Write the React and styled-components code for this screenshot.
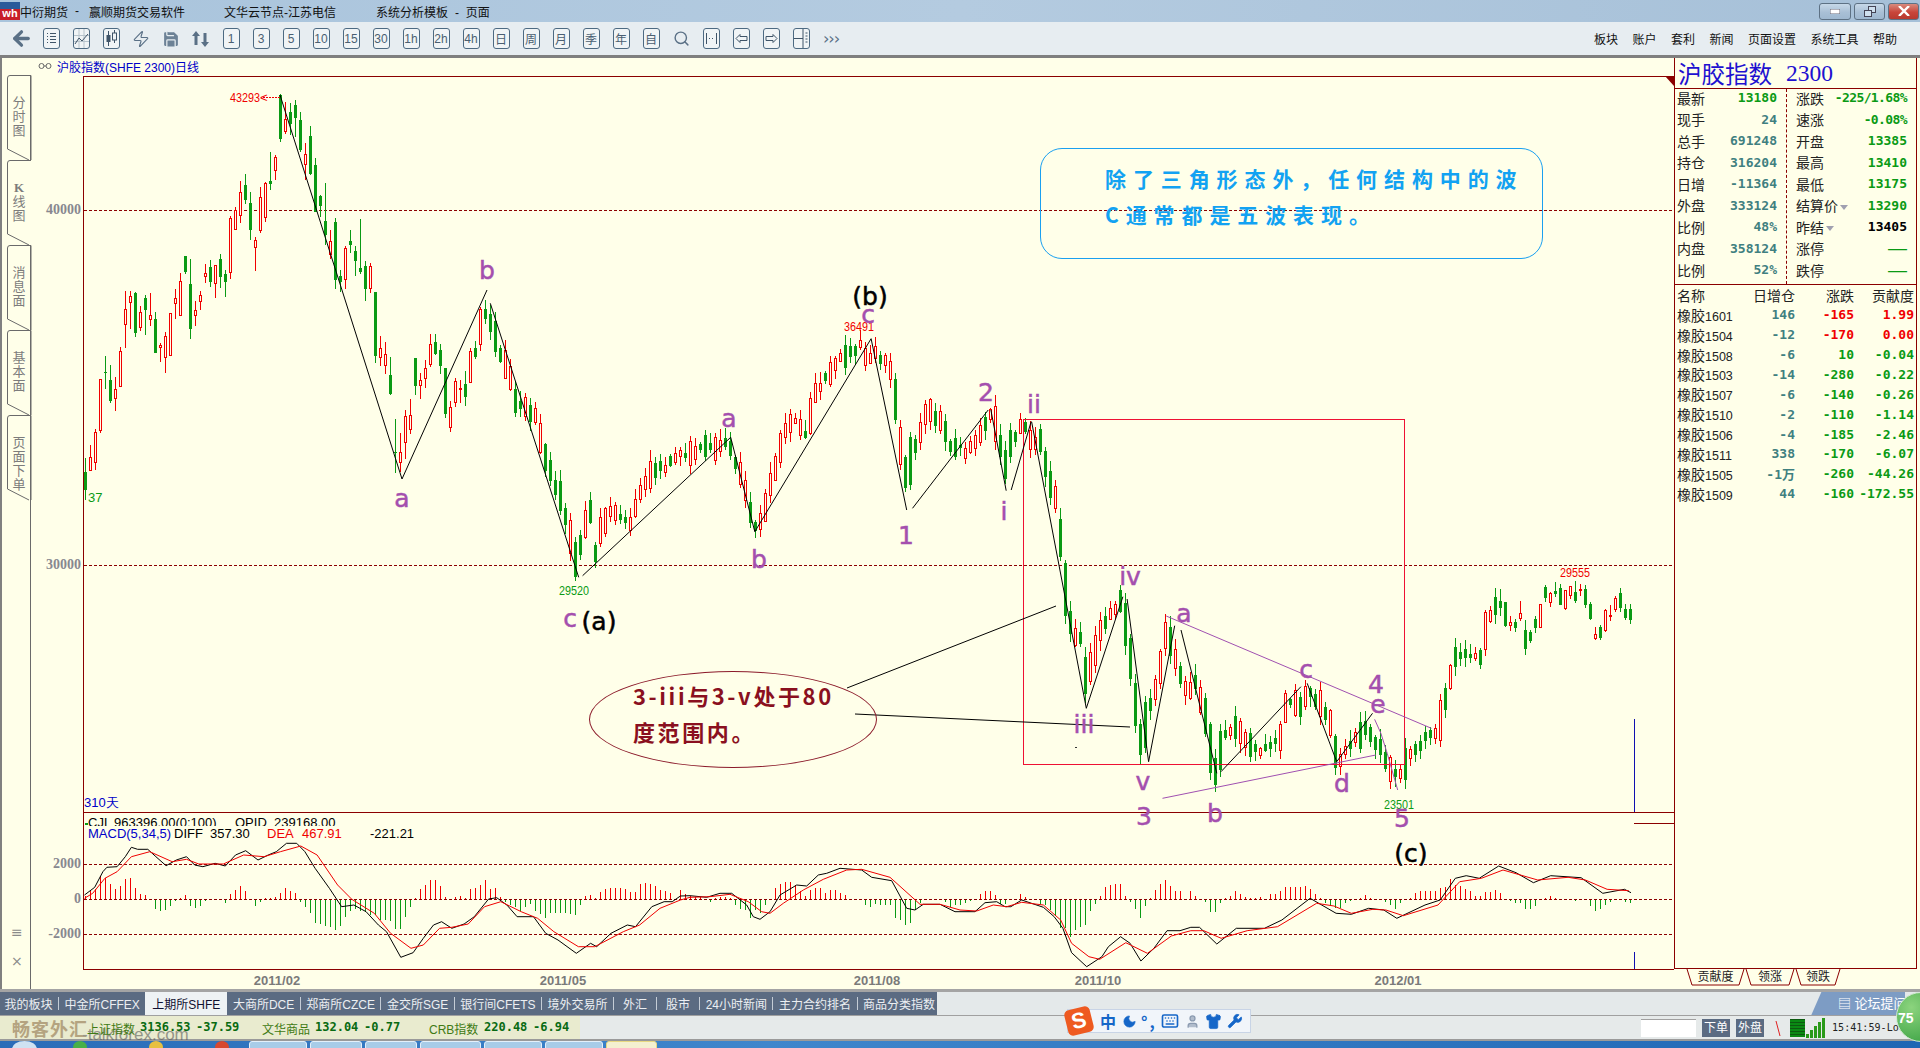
import React from "react"
import styled, { createGlobalStyle } from "styled-components"
import { Search, Moon, Keyboard, Shirt, Wrench, ArrowLeft, Zap, Save, User } from "lucide-react"

const CJK = `"Liberation Sans", "Noto Sans CJK SC", sans-serif`
const MONO = `"DejaVu Sans Mono", "Noto Sans CJK SC", monospace`
const PAPER = "#ffffe9"
const FRAME = "#8b0000"
const GREEN = "#0a9a14"
const TEAL = "#3f8080"

// ---- chart data, read from the chart by eye ----

// first stretch: [color, wickTop, bodyTop, bodyBottom, wickBottom] at 3x zoom
const firstBars = [
  "G 1195 1237 1290 1320", "R 1155 1190 1228 1232", "R 1108 1116 1207 1232", "R 958 958 1112 1120",
  "G 888 937 941 987", "G 915 960 1022 1030", "R 950 988 1016 1052", "R 862 874 980 980",
  "R 693 748 794 863", "R 693 708 725 806", "G 697 699 818 833", "R 738 757 803 813",
  "G 706 714 749 827", "R 699 766 778 797", "G 757 778 881 881", "R 850 856 862 908",
  "R 816 829 892 938", "R 760 760 886 886", "R 687 715 731 778", "R 640 664 766 768",
  "G 589 589 638 642", "G 598 672 806 838", "R 723 751 767 797", "R 693 706 724 750",
  "R 612 640 650 668", "G 601 622 666 683", "R 616 616 670 716", "G 582 598 651 683",
  "G 630 642 665 710", "R 468 475 637 658", "R 442 451 507 512", "R 364 397 466 489",
  "G 342 376 422 432", "G 396 430 510 539", "R 530 541 562 632", "R 380 412 510 518",
  "R 366 369 470 486", "G 277 364 374 392", "R 286 292 331 360", "G 103 105 236 248",
  "R 125 178 215 222", "G 130 156 192 225", "G 120 135 173 230", "G 157 181 272 276",
  "R 250 281 310 360", "G 198 228 342 345", "G 295 316 456 457", "G 405 408 437 470",
  "G 370 484 527 556", "R 510 542 582 596", "G 475 487 661 688", "G 630 648 665 697",
  "R 558 564 658 687", "G 510 544 556 578", "G 558 574 603 647", "G 477 625 637 642",
  "G 603 618 688 722", "R 609 618 683 698", "G 696 696 887 908", "R 828 865 892 917",
  "R 846 882 914 942", "G 891 945 1002 1005", "G 1077 1175 1178 1240", "R 1120 1177 1208 1238",
  "R 1050 1069 1148 1197", "R 1018 1066 1108 1122", "G 895 895 980 1007", "R 940 961 977 1017",
  "R 900 925 956 985", "R 822 853 912 920", "G 823 847 882 885", "G 853 870 917 942",
  "G 923 923 1060 1074", "R 1023 1042 1102 1116", "R 955 963 1025 1043", "R 960 985 987 1030",
  "G 934 972 1010 1038", "R 865 874 968 968", "G 843 865 891 897",
]

const lastBars = [
  "G 148 184 206 228", "G 186 186 258 260", "R 228 247 257 272", "G 238 246 263 278",
  "R 183 220 236 243", "G 241 271 329 347", "G 270 277 305 310", "G 227 238 266 278",
  "R 192 193 261 263", "G 135 141 174 187", "R 155 159 185 200", "G 126 153 161 170",
  "G 133 145 195 197", "R 151 151 206 212", "R 138 139 165 177", "G 124 156 183 190",
  "R 132 146 147 167", "G 135 147 195 203", "G 187 192 236 240", "R 262 283 294 302",
  "G 254 261 293 298", "R 207 210 271 276", "R 195 224 226 243", "R 168 174 208 215",
  "G 144 159 204 215", "G 193 207 233 242", "G 193 208 242 254",
]

// body centre path for the middle stretch
const pathA = [
  [15,210],[40,300],[65,370],[95,490],[145,520],[170,660],[195,730],[222,820],[237,890],[250,965],
  [275,850],[290,810],[300,950],[315,870],[340,815],[395,845],[420,760],[445,705],[485,675],[510,650],
  [550,640],[600,620],[640,610],[667,660],[690,740],[707,830],[720,870],[745,800],[772,670],[800,560],
  [825,530],[850,590],[875,450],[915,400],[940,340],[980,340],[997,300],[1010,370],[1035,340],[1075,390],
  [1088,520],[1100,630],[1115,740],[1128,640],[1140,610],[1165,505],[1205,550],[1230,630],[1270,630],
  [1310,570],[1337,520],[1362,630],[1375,690],[1388,600],[1416,555],[1440,600],[1466,600],[1480,700],
  [1505,790],[1520,930],
].map(([x, y]) => [480 + x / 2.613, 240 + y / 3])

const pathB = [
  [157,600],[170,700],[195,720],[205,880],[217,780],[240,690],[265,640],[290,590],[300,720],[312,800],
  [325,960],[337,1060],[348,930],[372,860],[395,680],[420,790],[445,880],[465,840],[490,960],[502,1085],
  [514,1130],[527,1000],[550,985],[575,1005],[600,1050],[630,1040],[665,1010],[680,900],[715,920],
  [730,870],[762,910],[787,985],[800,1085],[835,1035],[870,975],[895,1030],[918,1080],[942,1130],
  [954,1130],[966,1080],[990,1045],[1013,1000],[1037,1010],[1060,880],[1085,760],[1108,760],[1143,770],
  [1156,670],[1180,620],[1205,640],[1228,670],[1250,700],[1285,650],[1298,575],
].map(([x, y]) => [1000 + x / 2.376, 400 + y / 3])

const bodyPath = [[476, 340], ...pathA, ...pathB]

const interp = (pts, x) => {
  for (let i = 1; i < pts.length; i++) {
    if (x <= pts[i][0]) {
      const [x0, y0] = pts[i - 1]
      const [x1, y1] = pts[i]
      return y0 + ((x - x0) / (x1 - x0)) * (y1 - y0)
    }
  }
  return pts[pts.length - 1][1]
}

const parseBar = (s, base) => {
  const [c, a, b, d, e] = s.split(" ")
  return { up: c === "R", hi: base + a / 3, top: base + b / 3, bot: base + d / 3, lo: base + e / 3 }
}

const buildBars = () => {
  let seed = 71
  const rnd = () => {
    seed = (seed * 16807) % 2147483647
    return (seed % 1000) / 1000
  }
  const bars = []
  for (let i = 0; i < 310; i++) {
    const x = 85 + 5 * i
    if (i < firstBars.length) {
      bars.push({ x, ...parseBar(firstBars[i], 60) })
    } else if (i >= 283) {
      bars.push({ x, ...parseBar(lastBars[i - 283], 540) })
    } else {
      const slope = interp(bodyPath, x + 2.5) - interp(bodyPath, x - 2.5)
      const mid = interp(bodyPath, x) + (rnd() - 0.5) * 7
      const h = 3 + rnd() * rnd() * 26 + Math.abs(slope) * 0.8
      const up = slope < 0 ? rnd() < 0.62 : rnd() < 0.32
      const top = mid - h / 2
      const bot = mid + h / 2
      bars.push({ x, up, top, bot, hi: top - 1 - rnd() * 10, lo: bot + 1 + rnd() * 9 })
    }
  }
  return bars
}

const candles = buildBars()

const z9 = ([x, y]) => [60 + x / 2.45, 800 + y / 3]
const z12 = ([x, y]) => [690 + x / 3, 840 + y / 3]
const z10 = ([x, y]) => [1000 + x / 2.306, 800 + y / 3]
const z7 = ([x, y]) => [480 + x / 2.613, 240 + y / 3]
const z8 = ([x, y]) => [1000 + x / 2.376, 400 + y / 3]

const diffLine = [
  ...[[60,285],[85,262],[105,215],[115,202],[140,200],[160,170],[175,142],[190,148],[215,148],[235,170],[260,197],[285,180],[310,170],[330,195],[350,200],[380,190],[405,198],[430,165],[455,152],[485,180],[510,165],[530,155],[555,130],[580,130],[600,155],[625,205],[660,265],[690,320],[720,315],[750,335],[780,375],[800,395],[835,472],[865,458],[890,415],[915,375],[935,365],[960,385],[990,372],[1015,350],[1050,297],[1070,293],[1095,315],[1120,350],[1160,350],[1190,400],[1220,420],[1265,460],[1300,430],[1315,440],[1350,400],[1390,375],[1410,380],[1450,320],[1480,305],[1500,305],[1520,288]].map(z9),
  ...[[0,167],[50,172],[90,160],[125,160],[170,195],[190,230],[210,238],[240,215],[270,165],[320,135],[350,138],[385,105],[410,100],[450,85],[515,90],[545,112],[605,122],[650,205],[675,210],[700,193],[750,193],[795,215],[855,215],[885,188],[920,185],[945,200]].map(z12),
  ...[[25,320],[50,300],[100,322],[125,350],[145,385],[165,458],[200,500],[235,470],[250,440],[278,410],[300,430],[325,483],[355,445],[385,392],[415,392],[440,382],[460,382],[500,432],[545,385],[610,385],[650,360],[715,295],[775,340],[810,343],[850,325],[885,330],[915,355],[980,315],[1015,300],[1050,235],[1075,227],[1105,235],[1150,198],[1190,218],[1230,248],[1270,227],[1340,233],[1390,280],[1440,268],[1455,278]].map(z10),
]

const deaLine = [
  ...[[60,295],[80,280],[110,235],[140,215],[175,170],[220,155],[275,185],[310,178],[340,192],[400,192],[450,165],[500,170],[540,155],[590,138],[630,165],[680,255],[715,298],[770,340],[810,400],[860,445],[890,435],[930,385],[960,382],[1000,372],[1040,320],[1080,305],[1130,335],[1170,355],[1210,395],[1270,440],[1310,440],[1380,395],[1420,375],[1470,325],[1520,300]].map(z9),
  ...[[0,172],[60,170],[120,163],[175,185],[215,215],[240,220],[280,190],[340,150],[400,118],[470,90],[515,88],[600,112],[690,193],[750,193],[810,210],[860,213],[910,195],[950,200]].map(z12),
  ...[[50,307],[100,315],[140,360],[165,430],[205,470],[230,478],[290,428],[340,460],[395,408],[440,392],[470,392],[510,415],[570,392],[640,380],[730,310],[770,318],[810,340],[860,328],[890,330],[930,347],[1010,315],[1060,245],[1110,235],[1160,210],[1240,240],[1310,232],[1350,240],[1400,268],[1450,272]].map(z10),
]

const histZ9 = [[65,3],[76,8],[88,10],[100,23],[112,21],[125,15],[137,10],[150,13],[162,20],[175,21],[187,11],[199,5],[212,4],[237,-9],[248,-11],[261,-10],[273,-6],[285,-1],[298,1],[310,4],[323,-6],[335,-8],[347,-6],[360,-1],[408,-3],[420,5],[432,9],[445,13],[458,8],[482,-6],[494,-2],[506,1],[518,1],[530,2],[543,6],[555,11],[568,8],[580,6],[590,-2],[603,-7],[615,-13],[628,-23],[640,-24],[652,-26],[665,-27],[677,-30],[690,-26],[702,-17],[715,-11],[727,-9],[740,-11],[752,-12],[764,-15],[776,-15],[788,-20],[800,-20],[812,-21],[825,-29],[836,-29],[850,-17],[862,-7],[873,1],[885,10],[898,14],[910,19],[922,19],[935,13],[947,2],[970,2],[983,3],[995,1],[1008,10],[1020,11],[1032,14],[1045,19],[1057,10],[1068,11],[1080,2],[1092,-2],[1105,-5],[1117,-7],[1130,-11],[1143,-7],[1155,-4],[1167,-11],[1178,-14],[1190,-18],[1203,-13],[1215,-13],[1228,-13],[1240,-13],[1253,-14],[1265,-15],[1280,-5],[1290,3],[1303,4],[1315,1],[1327,7],[1340,10],[1352,11],[1364,11],[1376,11],[1388,10],[1400,7],[1412,7],[1425,15],[1437,16],[1450,15],[1462,13],[1475,9],[1487,8],[1500,6],[1522,9],[1535,5],[1547,3]]
const histZ12 = [[15,2],[30,2],[60,-2],[75,1],[90,2],[105,2],[120,1],[140,-5],[155,-9],[170,-10],[185,-18],[200,-10],[215,-13],[230,-5],[260,11],[275,15],[290,17],[305,17],[320,14],[335,8],[350,3],[365,9],[380,11],[395,11],[410,6],[425,9],[440,9],[455,6],[470,4],[530,-5],[545,-7],[560,-4],[575,-5],[590,-5],[605,-5],[620,-18],[635,-20],[650,-25],[665,-23],[680,-10],[695,-3],[770,-2],[785,-7],[800,-5],[815,-5],[830,-3],[845,-1],[875,5],[890,8],[905,8],[920,4],[935,-4],[950,-4]]
const histZ10 = [[50,5],[60,2],[90,-4],[100,-5],[112,-10],[125,-15],[137,-28],[150,-28],[165,-37],[175,-30],[187,-27],[199,-25],[212,-11],[222,-4],[235,3],[245,12],[258,14],[268,15],[280,15],[292,3],[304,-2],[315,-9],[327,-18],[338,-6],[350,1],[362,9],[373,15],[385,19],[395,13],[407,8],[420,8],[440,8],[452,3],[475,-2],[487,-12],[497,-12],[510,-3],[520,1],[533,3],[545,8],[557,5],[570,2],[580,1],[590,1],[603,2],[628,5],[637,5],[650,8],[660,12],[672,12],[685,12],[695,12],[707,13],[718,10],[730,5],[740,1],[752,-3],[765,-6],[775,-8],[787,-8],[798,-3],[810,-1],[835,1],[845,4],[857,1],[890,-2],[903,-5],[915,-9],[925,-3],[950,1],[960,6],[972,8],[985,8],[997,8],[1008,8],[1020,11],[1030,12],[1043,20],[1054,14],[1065,13],[1077,10],[1087,8],[1100,3],[1110,3],[1122,7],[1135,7],[1146,9],[1157,6],[1180,-1],[1190,-3],[1200,-3],[1213,-9],[1225,-9],[1238,-6],[1260,1],[1272,3],[1283,1],[1330,-1],[1355,-5],[1365,-6],[1377,-11],[1388,-9],[1400,-5],[1410,-2],[1445,-2],[1458,-3]]

const histBars = [
  ...histZ9.map(([x, v]) => [z9([x, 0])[0], v]),
  ...histZ12.map(([x, v]) => [z12([x, 0])[0], v]),
  ...histZ10.map(([x, v]) => [z10([x, 0])[0], v]),
].map(([x, v]) => [85 + 5 * Math.round((x - 85) / 5), v])

const blackLines = [
  [[280, 95], [402, 479], [487, 290]],
  [z7([27, 190]), z7([258, 1012])],
  [z7([268, 1007]), z7([655, 592]), z7([718, 875]), z7([1022, 296]), z7([1115, 810])],
  [z7([1130, 805]), z7([1328, 510])],
  [z7([1335, 510]), z7([1375, 752])],
  [z7([1388, 750]), z7([1440, 545])],
  [z8([75, 65]), z8([205, 925]), z8([292, 590])],
  [z8([302, 597]), z8([353, 1085]), z8([415, 677])],
  [z8([430, 690]), z8([515, 1120])],
  [z8([525, 1115]), z8([715, 860])],
  [z8([730, 850]), z8([800, 1085]), z8([885, 940])],
  [[847, 688], [1056, 606]],
  [[855, 714], [1130, 727]],
]

const purpleLines = [
  [z8([395, 648]), z8([1025, 985])],
  [z8([386, 1195]), z8([893, 1065])],
  [z8([890, 958]), z8([905, 1000]), z8([920, 1060]), z8([945, 1170])],
]

const waveLabels = [
  ["a", 402, 507], ["b", 487, 279], ["c", 570, 627], ["a", 729, 427], ["b", 759, 568], ["c", 868, 323],
  ["1", 906, 544], ["2", 986, 401], ["ii", 1034, 413], ["i", 1004, 520], ["iv", 1130, 585], ["iii", 1084, 733],
  ["v", 1143, 790], ["3", 1144, 825], ["b", 1215, 822], ["a", 1184, 622], ["c", 1306, 678], ["4", 1376, 693],
  ["e", 1378, 713], ["d", 1342, 792], ["5", 1402, 827],
]

const degreeLabels = [["(a)", 599, 630], ["(b)", 870, 305], ["(c)", 1411, 862]]

const priceMarks = [
  ["43293", 245, 97, "#f00000"], ["36491", 859, 326, "#f00000"], ["29555", 1575, 572, "#f00000"],
  ["29520", 574, 590, GREEN], ["23501", 1399, 804, GREEN],
]

const dateLabels = [["2011/02", 277], ["2011/05", 563], ["2011/08", 877], ["2011/10", 1098], ["2012/01", 1398]]

const pts = (list) => list.map(([x, y]) => `${x.toFixed(1)},${y.toFixed(1)}`).join(" ")

// ---- side panel data ----

const quoteRows = [
  ["最新", "13180", GREEN, "涨跌", "-225/1.68%", GREEN],
  ["现手", "24", TEAL, "速涨", "-0.08%", GREEN],
  ["总手", "691248", TEAL, "开盘", "13385", GREEN],
  ["持仓", "316204", TEAL, "最高", "13410", GREEN],
  ["日增", "-11364", TEAL, "最低", "13175", GREEN],
  ["外盘", "333124", TEAL, "结算价", "13290", GREEN, true],
  ["比例", "48%", TEAL, "昨结", "13405", "#000", true],
  ["内盘", "358124", TEAL, "涨停", "—", GREEN],
  ["比例", "52%", TEAL, "跌停", "—", GREEN],
]

const contractRows = [
  ["1601", "146", "-165", "#f00000", "1.99", "#f00000"],
  ["1504", "-12", "-170", "#f00000", "0.00", "#f00000"],
  ["1508", "-6", "10", GREEN, "-0.04", GREEN],
  ["1503", "-14", "-280", GREEN, "-0.22", GREEN],
  ["1507", "-6", "-140", GREEN, "-0.26", GREEN],
  ["1510", "-2", "-110", GREEN, "-1.14", GREEN],
  ["1506", "-4", "-185", GREEN, "-2.46", GREEN],
  ["1511", "338", "-170", GREEN, "-6.07", GREEN],
  ["1505", "-1万", "-260", GREEN, "-44.26", GREEN],
  ["1509", "44", "-160", GREEN, "-172.55", GREEN],
]

const periodButtons = ["1", "3", "5", "10", "15", "30", "1h", "2h", "4h", "日", "周", "月", "季", "年", "自"]
const menuItems = ["板块", "账户", "套利", "新闻", "页面设置", "系统工具", "帮助"]
const sideTabs = [
  { label: "分时图", active: false },
  { label: "K线图", active: true },
  { label: "消息面", active: false },
  { label: "基本面", active: false },
  { label: "页面下单", active: false },
]
const marketTabs = [
  "我的板块", "中金所CFFEX", "上期所SHFE", "大商所DCE", "郑商所CZCE", "金交所SGE", "银行间CFETS",
  "境外交易所", "外汇", "股市", "24小时新闻", "主力合约排名", "商品分类指数",
]
const taskButtons = [58, 52, 52, 61, 58, 58, 51]
const quickIcons = [
  { color: "#48b048", gap: 36 },
  { color: "#e8c040", gap: 62 },
  { color: "#d84830", gap: 52 },
]

// ---- styles ----

const GlobalStyle = createGlobalStyle`
  html, body {
    margin: 0;
    width: 1920px;
    height: 1048px;
    overflow: hidden;
    background: ${PAPER};
    font-family: ${CJK};
  }
`

const Page = styled.div`
  width: 1920px;
  height: 1048px;
  display: flex;
  flex-direction: column;
  position: relative;
  overflow: hidden;
`

const TitleBar = styled.div`
  height: 22px;
  display: flex;
  align-items: center;
  background: linear-gradient(90deg, #a9c4dc 0%, #b4cbe0 50%, #a6c0d8 100%);
  font-size: 12px;
  color: #111;
`

const AppLogo = styled.div`
  width: 20px;
  height: 18px;
  background: linear-gradient(180deg, #2a5a9a 0 40%, #c81e2a 40%);
  color: #fff;
  font: bold 11px "Liberation Sans", sans-serif;
  line-height: 22px;
  text-align: center;
`

const TitleText = styled.span`
  margin-left: ${(p) => p.$gap}px;
  white-space: pre;
`

const WindowButtons = styled.div`
  margin-left: auto;
  display: flex;
  gap: 3px;
  padding-right: 1px;
`

const WinButton = styled.div`
  width: ${(p) => p.$w}px;
  height: 17px;
  border: 1px solid #5d7184;
  border-radius: 3px;
  box-sizing: border-box;
  background: ${(p) =>
    p.$close
      ? "linear-gradient(180deg, #d98b7e, #c8453a 55%, #b83a30)"
      : "linear-gradient(180deg, #c6d8e8, #a9c0d6 55%, #9fb8d0)"};
  display: flex;
  align-items: center;
  justify-content: center;
`

const ToolBar = styled.div`
  height: 36px;
  box-sizing: border-box;
  display: flex;
  align-items: center;
  padding: 0 0 0 6px;
  background: #e7edf1;
  border-bottom: 3px solid #7f7f7f;
`

const ToolCell = styled.div`
  width: 30px;
  display: flex;
  justify-content: center;
  color: #5a7086;
`

const ToolBox = styled.div`
  width: 17px;
  height: 21px;
  box-sizing: border-box;
  border: 1px solid #4d6a82;
  border-radius: 3px;
  background: #f0f4f6;
  display: flex;
  align-items: center;
  justify-content: center;
  font: 12px ${CJK};
  color: #4a5f72;
  overflow: hidden;
`

const Chevrons = styled.span`
  font: 16px "DejaVu Sans", sans-serif;
  letter-spacing: -1px;
  color: #5a7086;
`

const Menu = styled.nav`
  margin-left: auto;
  display: flex;
  gap: 14.5px;
  padding-right: 23px;
  font-size: 12px;
  color: #111;
`

const Main = styled.div`
  height: 931px;
  display: flex;
  background: ${PAPER};
`

const Rail = styled.div`
  width: 31px;
  box-sizing: border-box;
  border-left: 2px solid #808080;
  padding: 17px 0 0 5px;
  display: flex;
  flex-direction: column;
  position: relative;
`

const RailLine = styled.div`
  position: absolute;
  right: 0;
  top: 17px;
  bottom: 0;
  width: 1px;
  background: #6a6a6a;
`

const RailTab = styled.div`
  width: 24px;
  height: 85px;
  position: relative;
  display: flex;
  flex-direction: column;
  align-items: center;
  padding-top: 21px;
  box-sizing: border-box;
  font-size: 13px;
  line-height: 14px;
  color: #7c7c7c;
  background: ${(p) => (p.$active ? PAPER : "transparent")};
  z-index: ${(p) => (p.$active ? 1 : 0)};
`

const RailChar = styled.span`
  font-family: ${(p) => (p.$latin ? `"Liberation Serif", serif` : "inherit")};
  font-weight: ${(p) => (p.$latin ? "bold" : "normal")};
`

const RailOutline = styled.svg`
  position: absolute;
  left: 0;
  top: 0;
`

const RailGlyph = styled.div`
  position: absolute;
  left: 9px;
  bottom: ${(p) => p.$b}px;
  color: #8a8a8a;
  font: 14px "DejaVu Sans", sans-serif;
`

const ChartPane = styled.div`
  width: 1643px;
  position: relative;
  display: flex;
  flex-direction: column;
`

const ChartHeader = styled.div`
  height: 18px;
  box-sizing: border-box;
  padding: 0 0 2px 7px;
  display: flex;
  align-items: center;
  gap: 5px;
  font-size: 12px;
  color: #0000c8;
`

const ChartCanvas = styled.svg`
  display: block;
`

const WaveLabel = styled.text`
  font: 25px "DejaVu Sans", sans-serif;
  text-anchor: middle;
  fill: #a44fae;
  stroke: #a44fae;
  stroke-width: 0.5px;
`

const DegreeLabel = styled.text`
  font: 25px "DejaVu Sans", sans-serif;
  text-anchor: middle;
  fill: #000;
  stroke: #000;
  stroke-width: 0.5px;
`

const AxisLabel = styled.text`
  font: bold 14px "Liberation Serif", serif;
  text-anchor: end;
  fill: #888890;
`

const DateLabel = styled.text`
  font: bold 13px "Liberation Sans", sans-serif;
  text-anchor: middle;
  fill: #7a7a7a;
`

const PriceMark = styled.text`
  font: 13px "Liberation Sans", sans-serif;
  fill: ${(p) => p.$c};
`

const MacdText = styled.text`
  font: 13px "Liberation Sans", sans-serif;
  fill: ${(p) => p.$c || "#000"};
`

const NoteBox = styled.div`
  position: absolute;
  left: 1009px;
  top: 90px;
  width: 503px;
  height: 111px;
  box-sizing: border-box;
  border: 1px solid #1aa0f0;
  border-radius: 22px;
  padding: 11px 0 0 64px;
  color: #12a2f2;
  font: bold 21px/36px "Noto Sans CJK SC", sans-serif;
  letter-spacing: 6.9px;
  white-space: nowrap;
`

const NoteEllipse = styled.div`
  position: absolute;
  left: 558px;
  top: 613px;
  width: 288px;
  height: 97px;
  box-sizing: border-box;
  border: 1px solid #8b1a2a;
  border-radius: 50%;
  padding: 5px 0 0 43px;
  color: #8a1020;
  font: bold 22px/36px "Noto Sans CJK SC", sans-serif;
  letter-spacing: 2.6px;
  white-space: nowrap;
`

const SidePanel = styled.aside`
  width: 246px;
  display: flex;
  flex-direction: column;
`

const SideBody = styled.div`
  height: 911px;
  width: 243px;
  box-sizing: border-box;
  border-left: 1px solid ${FRAME};
  border-right: 1px solid ${FRAME};
  border-bottom: 1px solid ${FRAME};
  display: flex;
  flex-direction: column;
`

const SideTitle = styled.div`
  height: 31px;
  box-sizing: border-box;
  border-bottom: 1px solid ${FRAME};
  padding-left: 3px;
  display: flex;
  align-items: center;
  gap: 14px;
  color: #2010d0;
  font: 23.5px "Liberation Serif", "Noto Sans CJK SC", serif;
`

const QuoteTable = styled.div`
  height: 196px;
  box-sizing: border-box;
  border-bottom: 1px solid ${FRAME};
  display: grid;
  grid-template-columns: 111px 1fr;
  grid-auto-rows: 21.5px;
  position: relative;
`

const QuoteDivider = styled.div`
  position: absolute;
  left: 111px;
  top: 0;
  bottom: 0;
  border-left: 1px dashed ${FRAME};
`

const QuoteCell = styled.div`
  display: flex;
  align-items: center;
  box-sizing: border-box;
  padding: ${(p) => (p.$right ? "0 9px 4px 10px" : "0 9px 4px 2px")};
  font-size: 14px;
  color: #222;
`

const QuoteValue = styled.span`
  margin-left: auto;
  font: bold 13px ${MONO};
  letter-spacing: ${(p) => (p.$tight ? "-0.6px" : "0")};
  color: ${(p) => p.$c};
`

const QuoteDash = styled.span`
  margin-left: auto;
  font: 19px "Liberation Sans", sans-serif;
  color: ${GREEN};
`

const Caret = styled.span`
  width: 0;
  height: 0;
  margin: 4px 0 0 2px;
  border-left: 4px solid transparent;
  border-right: 4px solid transparent;
  border-top: 5px solid #a0a0b0;
`

const ContractList = styled.div`
  display: flex;
  flex-direction: column;
`

const ContractRow = styled.div`
  height: 19.87px;
  display: grid;
  grid-template-columns: 60px 58px 59px 60px;
  align-items: center;
  padding-left: 2px;
  font-size: 14px;
  color: #222;
`

const ContractName = styled.span`
  white-space: nowrap;
  span {
    font: 12.5px "Liberation Sans", sans-serif;
  }
`

const ContractHead = styled.span`
  text-align: right;
`

const ContractValue = styled.span`
  text-align: right;
  font: bold 13px ${MONO};
  color: ${(p) => p.$c};
  white-space: nowrap;
`

const SideTabs = styled.div`
  display: flex;
  padding-left: 12px;
`

const SideTab = styled.div`
  width: ${(p) => p.$w}px;
  height: 17px;
  position: relative;
  font-size: 12px;
  line-height: 16px;
  text-align: center;
  color: #222;
`

const SideTabShape = styled.svg`
  position: absolute;
  left: 0;
  top: 0;
`

const MarketStrip = styled.div`
  height: 26px;
  box-sizing: border-box;
  border-top: 3px solid #a4a4a4;
  background: #e4e9ea;
  position: relative;
`

const MarketBar = styled.div`
  width: 937px;
  height: 23px;
  background: #5b6b82;
  display: flex;
  align-items: center;
  padding-left: 5px;
  box-sizing: border-box;
  font-size: 12px;
  color: #eceff2;
  white-space: nowrap;
`

const MarketTab = styled.div`
  display: flex;
  align-items: center;
  padding: 0 ${(p) => (p.$active ? 7 : p.$pad)}px;
  background: ${(p) => (p.$active ? "#eef2f4" : "transparent")};
  color: ${(p) => (p.$active ? "#101030" : "inherit")};
  border-right: ${(p) => (p.$sep ? "1px solid #c4ccd6" : "none")};
  height: ${(p) => (p.$active ? "23px" : "13px")};
  margin-left: ${(p) => p.$ml}px;
`

const StatusRow = styled.div`
  height: 24px;
  box-sizing: border-box;
  border-top: 1px solid #a0a0a0;
  background: #e6eaea;
  display: flex;
  align-items: center;
  position: relative;
`

const TickerBox = styled.div`
  width: 580px;
  height: 100%;
  background: #e9ebcf;
  position: relative;
  font-size: 12px;
`

const TickerItem = styled.span`
  position: absolute;
  left: ${(p) => p.$x}px;
  top: 4px;
  color: ${(p) => (p.$value ? "#086a12" : "#3f7a14")};
  font: ${(p) => (p.$value ? `bold 12px ${MONO}` : `12px ${CJK}`)};
  white-space: nowrap;
`

const Watermark = styled.div`
  position: absolute;
  left: 12px;
  top: 1px;
  font: bold 18px "Noto Sans CJK SC", sans-serif;
  line-height: 22px;
  letter-spacing: 1px;
  color: #8a6a40;
  opacity: 0.55;
  white-space: nowrap;
`

const WatermarkUrl = styled.span`
  position: relative;
  top: 4px;
  margin-left: -6px;
  font: 17px "Liberation Sans", sans-serif;
  color: #505050;
  letter-spacing: 0;
`

const ImeBar = styled.div`
  position: absolute;
  left: 1067px;
  top: -7px;
  width: 184px;
  height: 24px;
  box-sizing: border-box;
  background: #f1f5fa;
  border: 1px solid #c8d4e6;
  display: flex;
  align-items: center;
  color: #1566c8;
`

const ImeLogo = styled.div`
  width: 26px;
  height: 26px;
  margin-left: -2px;
  border-radius: 5px;
  background: #ee5a20;
  color: #fff;
  font: bold 22px/26px "Liberation Sans", sans-serif;
  text-align: center;
  transform: rotate(-14deg);
`

const ImeText = styled.span`
  font: bold 16px "Noto Sans CJK SC", sans-serif;
  margin: 0 ${(p) => p.$r || 0}px 0 ${(p) => p.$l || 0}px;
`

const ImeIcon = styled.span`
  display: flex;
  margin-left: ${(p) => p.$l}px;
`

const StatusTools = styled.div`
  margin-left: auto;
  display: flex;
  align-items: center;
  padding-right: 15px;
  font-size: 12px;
`

const OrderInput = styled.div`
  width: 55px;
  height: 17px;
  background: #fff;
  border-top: 1px solid #a0a0a0;
`

const OrderButton = styled.div`
  width: 28px;
  height: 18px;
  margin-left: 6px;
  background: #5b6b82;
  color: #fff;
  text-align: center;
  line-height: 18px;
`

const SignalBox = styled.div`
  width: 15px;
  height: 18px;
  margin: 0 1px 0 0;
  background: repeating-linear-gradient(0deg, #0a8a14 0 2px, #0c5a10 2px 3px);
`

const SignalBars = styled.div`
  display: flex;
  align-items: flex-end;
  gap: 1px;
  height: 20px;
  margin-right: 7px;
`

const SignalBar = styled.span`
  width: 3px;
  height: ${(p) => p.$h}px;
  background: #2a9a1a;
`

const Clock = styled.span`
  width: 73px;
  white-space: nowrap;
  font: 10px ${MONO};
  letter-spacing: 0.05px;
  color: #222;
`

const ForumTab = styled.div`
  position: absolute;
  right: 15px;
  top: 0;
  width: 95px;
  height: 26px;
  background: #7d9cc4;
  clip-path: polygon(12% 0, 100% 0, 100% 100%, 0 100%);
  color: #fff;
  font-size: 13px;
  line-height: 24px;
  padding-left: 28px;
  box-sizing: border-box;
  white-space: nowrap;
`

const ForumBadge = styled.div`
  position: absolute;
  right: -26px;
  top: 992px;
  width: 50px;
  height: 50px;
  border-radius: 50%;
  background: radial-gradient(circle at 30% 30%, #8cd47e, #2e9a3a);
  border: 1px solid #d0e8d0;
  color: #fff;
  font: bold 14px/50px "Liberation Sans", sans-serif;
  padding-left: 1px;
  box-sizing: border-box;
`

const TaskBar = styled.div`
  height: 9px;
  box-sizing: border-box;
  border-top: 2px solid #9a9a9a;
  background: linear-gradient(90deg, #2a6cb8, #3f86cc 40%, #1f66b4);
  display: flex;
  align-items: flex-start;
  overflow: hidden;
  padding-left: 12px;
`

const StartOrb = styled.div`
  width: 25px;
  height: 16px;
  border-radius: 50%;
  background: #cfe2f2;
`

const QuickIcon = styled.div`
  width: 14px;
  height: 12px;
  margin-left: ${(p) => p.$gap}px;
  border-radius: 50%;
  background: ${(p) => p.$color};
`

const TaskButton = styled.div`
  width: ${(p) => p.$w}px;
  height: 9px;
  margin-left: ${(p) => p.$ml}px;
  border: 1px solid ${(p) => (p.$active ? "#e8d880" : "#e4f0fa")};
  border-radius: 3px 3px 0 0;
  box-sizing: border-box;
  background: ${(p) => (p.$active ? "#f4f0d0" : "#a8cce8")};
`

// ---- drawings ----

const BoxLines = () => (
  <svg width="13" height="17" viewBox="0 0 13 17" fill="none" stroke="#3f5468">
    {[3.5, 6.5, 9.5, 12.5].map((y) => (
      <path key={y} d={`M2 ${y}h1M5 ${y}h6`} />
    ))}
  </svg>
)

const BoxTrend = () => (
  <svg width="15" height="19" viewBox="0 0 15 19" fill="none">
    <path d="M0 6.5h15M0 12.5h15M5 0v19M10 0v19" stroke="#b8c4cc" />
    <path d="M1 15L5 9l3 3 6-7" stroke="#3f5468" />
  </svg>
)

const BoxCandles = () => (
  <svg width="15" height="19" viewBox="0 0 15 19">
    <path d="M4.5 2v15M10.5 1v13" stroke="#3f5468" />
    <rect x="2.5" y="6" width="4" height="7" fill="#3f5468" />
    <rect x="8.5" y="4" width="4" height="7" fill="#f0f4f6" stroke="#3f5468" />
  </svg>
)

const SwapArrows = () => (
  <svg width="22" height="22" viewBox="0 0 22 22" fill="#5a7086">
    <path d="M6 3l4 5H7.5v9h-3V8H2zM15 19l-4-5h2.5V5h3v9H19z" />
  </svg>
)

const BoxSpan = () => (
  <svg width="15" height="19" viewBox="0 0 15 19" fill="none" stroke="#3f5468">
    <path d="M2.5 4v11M12.5 4v11" />
    <path d="M5 9.5h1M8 9.5h1" />
  </svg>
)

const BoxArrow = ({ flip }) => (
  <svg width="15" height="19" viewBox="0 0 15 19" fill="none" stroke="#3f5468">
    <path d={flip ? "M13 9.5L9 5.5v2H2v4h7v2z" : "M2 9.5l4-4v2h7v4H6v2z"} />
  </svg>
)

const BoxSplit = () => (
  <svg width="15" height="19" viewBox="0 0 15 19" fill="none" stroke="#3f5468">
    <path d="M0 9.5h9M9 0v19" />
    <path d="M11.5 4h2M11.5 7h2M11.5 10h2M11.5 13h2" />
  </svg>
)

const LinkIcon = () => (
  <svg width="14" height="10" viewBox="0 0 14 10" fill="none" stroke="#666">
    <circle cx="3.5" cy="5" r="2.5" />
    <circle cx="10.5" cy="5" r="2.5" />
    <path d="M6 5h2" />
  </svg>
)

const RailShape = ({ active }) => (
  <RailOutline width="25" height="86" viewBox="0 0 25 86" fill="none" stroke="#6a6a6a">
    <path d={`M.5 74V3Q.5 .5 3 .5H24${active ? "" : "V85"}`} />
    <path d="M.5 74L22 85" />
  </RailOutline>
)

const SideTabOutline = ({ w }) => (
  <SideTabShape width={w} height="17" viewBox={`0 0 ${w} 17`} fill="none" stroke={FRAME}>
    <path d={`M1 0L6 16H${w - 6}L${w - 1} 0`} />
  </SideTabShape>
)

// ---- chart ----

const Candle = ({ bar }) => {
  const color = bar.up ? "#f00000" : "#0a9a14"
  const top = Math.round(bar.top)
  const h = Math.max(1, Math.round(bar.bot - bar.top))
  return (
    <g>
      <rect x={bar.x} y={Math.round(bar.hi)} width="1" height={Math.max(1, Math.round(bar.lo - bar.hi))} fill={color} />
      {bar.up ? (
        <rect x={bar.x - 0.5} y={top + 0.5} width="2" height={h} fill={PAPER} stroke={color} />
      ) : (
        <rect x={bar.x - 1} y={top} width="3" height={h} fill={color} />
      )}
    </g>
  )
}

const PriceChart = () => (
  <ChartCanvas width="1643" height="913" viewBox="31 76 1643 913" shapeRendering="auto">
    <g stroke={FRAME} strokeWidth="1" shapeRendering="crispEdges">
      <path d="M83 76.5H1674M83.5 76V969M83 812.5H1674M83 969.5H1674" fill="none" />
      <path d="M84 210.5H1674M84 565.5H1674M84 864.5H1674M84 899.5H1674M84 934.5H1674" fill="none" strokeDasharray="3 2" />
      <path d="M1634.5 719V812M1634.5 952V969" stroke="#1010b0" fill="none" />
      <path d="M1634 823.5H1674" fill="none" />
    </g>
    <path d="M1665 76H1674V86Z" fill={FRAME} />

    <AxisLabel x="81" y="214">40000</AxisLabel>
    <AxisLabel x="81" y="569">30000</AxisLabel>
    <AxisLabel x="81" y="868">2000</AxisLabel>
    <AxisLabel x="81" y="903">0</AxisLabel>
    <AxisLabel x="81" y="938">-2000</AxisLabel>

    <g shapeRendering="crispEdges">
      {candles.map((bar) => (
        <Candle key={bar.x} bar={bar} />
      ))}
    </g>

    <rect x="1023.5" y="419.5" width="381" height="345" fill="none" stroke="#ee1133" shapeRendering="crispEdges" />

    <g fill="none" stroke="#000" strokeWidth="1">
      {blackLines.map((line, i) => (
        <polyline key={i} points={pts(line)} />
      ))}
    </g>
    <g fill="none" stroke="#a050b0" strokeWidth="1">
      {purpleLines.map((line, i) => (
        <polyline key={i} points={pts(line)} />
      ))}
    </g>
    <rect x="1075" y="747" width="2" height="1" fill="#333" />

    <path d="M263 97.5H280" stroke="#f00000" strokeDasharray="2 1" />
    {priceMarks.map(([label, cx, cy, c]) => (
      <PriceMark key={label} $c={c} x={cx - 15} y={cy + 5} textLength="30" lengthAdjust="spacingAndGlyphs">
        {label}
      </PriceMark>
    ))}
    <PriceMark $c="#f00000" x="260" y="102">&lt;</PriceMark>
    <PriceMark $c={GREEN} x="88" y="502">37</PriceMark>

    {waveLabels.map(([label, x, y], i) => (
      <WaveLabel key={i} x={x} y={y}>{label}</WaveLabel>
    ))}
    {degreeLabels.map(([label, x, y]) => (
      <DegreeLabel key={label} x={x} y={y}>{label}</DegreeLabel>
    ))}

    <g shapeRendering="crispEdges">
      {histBars.map(([x, v], i) => (
        <rect key={i} x={x} y={v > 0 ? 899 - v : 900} width="1" height={Math.abs(v)} fill={v > 0 ? "#f00000" : "#0a9a14"} />
      ))}
    </g>
    <polyline points={pts(diffLine)} fill="none" stroke="#000" />
    <polyline points={pts(deaLine)} fill="none" stroke="#f00000" />

    <MacdText $c="#0000c8" x="84" y="807">310天</MacdText>
    <MacdText x="88" y="827">CJL</MacdText>
    <MacdText x="114" y="827">963396.00(0:100)</MacdText>
    <MacdText x="235" y="827">OPID</MacdText>
    <MacdText x="274" y="827">239168.00</MacdText>
    <rect x="84" y="826" width="380" height="14" fill={PAPER} />
    <rect x="85" y="823" width="3" height="2" fill={GREEN} />
    <MacdText $c="#0000c8" x="88" y="838">MACD(5,34,5)</MacdText>
    <MacdText x="174" y="838">DIFF</MacdText>
    <MacdText x="210" y="838">357.30</MacdText>
    <MacdText $c="#f00000" x="267" y="838">DEA</MacdText>
    <MacdText $c="#f00000" x="302" y="838">467.91</MacdText>
    <MacdText x="370" y="838">-221.21</MacdText>

    {dateLabels.map(([label, x]) => (
      <DateLabel key={label} x={x} y="985">{label}</DateLabel>
    ))}
  </ChartCanvas>
)

// ---- page ----

export default function App() {
  return (
    <Page>
      <GlobalStyle />
      <TitleBar>
        <AppLogo>wh</AppLogo>
        <TitleText $gap={0}>中衍期货</TitleText>
        <TitleText $gap={7}>-</TitleText>
        <TitleText $gap={10}>赢顺期货交易软件</TitleText>
        <TitleText $gap={39}>文华云节点-江苏电信</TitleText>
        <TitleText $gap={40}>系统分析模板</TitleText>
        <TitleText $gap={7}>-  页面</TitleText>
        <WindowButtons>
          <WinButton $w={32}>
            <svg width="10" height="5"><rect width="10" height="5" fill="#fff" stroke="#667" /></svg>
          </WinButton>
          <WinButton $w={31}>
            <svg width="12" height="11" fill="#cfe0ee" stroke="#445">
              <rect x="4.5" y="0.5" width="7" height="6" />
              <rect x="0.5" y="4.5" width="7" height="6" />
            </svg>
          </WinButton>
          <WinButton $w={31} $close>
            <svg width="12" height="10" stroke="#fff" strokeWidth="2.4"><path d="M1 0l10 10M11 0L1 10" /></svg>
          </WinButton>
        </WindowButtons>
      </TitleBar>

      <ToolBar>
        <ToolCell><ArrowLeft size={23} strokeWidth={3.4} /></ToolCell>
        <ToolCell><ToolBox><BoxLines /></ToolBox></ToolCell>
        <ToolCell><ToolBox><BoxTrend /></ToolBox></ToolCell>
        <ToolCell><ToolBox><BoxCandles /></ToolBox></ToolCell>
        <ToolCell><Zap size={18} strokeWidth={1.5} /></ToolCell>
        <ToolCell><Save size={20} fill="#6d8296" color="#e8eef2" strokeWidth={1.5} /></ToolCell>
        <ToolCell><SwapArrows /></ToolCell>
        {periodButtons.map((label) => (
          <ToolCell key={label}><ToolBox>{label}</ToolBox></ToolCell>
        ))}
        <ToolCell><Search size={17} strokeWidth={2} /></ToolCell>
        <ToolCell><ToolBox><BoxSpan /></ToolBox></ToolCell>
        <ToolCell><ToolBox><BoxArrow /></ToolBox></ToolCell>
        <ToolCell><ToolBox><BoxArrow flip /></ToolBox></ToolCell>
        <ToolCell><ToolBox><BoxSplit /></ToolBox></ToolCell>
        <ToolCell><Chevrons>›››</Chevrons></ToolCell>
        <Menu>
          {menuItems.map((item) => (
            <span key={item}>{item}</span>
          ))}
        </Menu>
      </ToolBar>

      <Main>
        <Rail>
          <RailLine />
          {sideTabs.map((tab) => (
            <RailTab key={tab.label} $active={tab.active}>
              <RailShape active={tab.active} />
              {tab.label.split("").map((ch, i) => (
                <RailChar key={i} $latin={ch === "K"}>{ch}</RailChar>
              ))}
            </RailTab>
          ))}
          <RailGlyph $b={49}>≡</RailGlyph>
          <RailGlyph $b={20}>×</RailGlyph>
        </Rail>

        <ChartPane>
          <ChartHeader>
            <LinkIcon />
            <span>沪胶指数(SHFE 2300)日线</span>
          </ChartHeader>
          <PriceChart />
          <NoteBox>
            除了三角形态外，任何结构中的波
            <br />
            C通常都是五波表现。
          </NoteBox>
          <NoteEllipse>
            3-iii与3-v处于80
            <br />
            度范围内。
          </NoteEllipse>
        </ChartPane>

        <SidePanel>
          <SideBody>
            <SideTitle>
              <span>沪胶指数</span>
              <span>2300</span>
            </SideTitle>
            <QuoteTable>
              <QuoteDivider />
              {quoteRows.map(([l1, v1, c1, l2, v2, c2, caret]) => (
                <React.Fragment key={l1 + l2}>
                  <QuoteCell>
                    {l1}
                    <QuoteValue $c={c1}>{v1}</QuoteValue>
                  </QuoteCell>
                  <QuoteCell $right>
                    {l2}
                    {caret && <Caret />}
                    {v2 === "—" ? (
                      <QuoteDash>{v2}</QuoteDash>
                    ) : (
                      <QuoteValue $c={c2} $tight={v2.includes("%")}>{v2}</QuoteValue>
                    )}
                  </QuoteCell>
                </React.Fragment>
              ))}
            </QuoteTable>
            <ContractList>
              <ContractRow>
                <span>名称</span>
                <ContractHead>日增仓</ContractHead>
                <ContractHead>涨跌</ContractHead>
                <ContractHead>贡献度</ContractHead>
              </ContractRow>
              {contractRows.map(([code, oi, chg, chgC, share, shareC]) => (
                <ContractRow key={code}>
                  <ContractName>橡胶<span>{code}</span></ContractName>
                  <ContractValue $c={TEAL}>{oi}</ContractValue>
                  <ContractValue $c={chgC}>{chg}</ContractValue>
                  <ContractValue $c={shareC}>{share}</ContractValue>
                </ContractRow>
              ))}
            </ContractList>
          </SideBody>
          <SideTabs>
            <SideTab $w={59}><SideTabOutline w={59} />贡献度</SideTab>
            <SideTab $w={50}><SideTabOutline w={50} />领涨</SideTab>
            <SideTab $w={46}><SideTabOutline w={46} />领跌</SideTab>
          </SideTabs>
        </SidePanel>
      </Main>

      <MarketStrip>
        <MarketBar>
          {marketTabs.map((tab, i) => (
            <MarketTab
              key={tab}
              $active={i === 2}
              $sep={i !== 1 && i !== 2 && i !== 12}
              $pad={tab === "外汇" || tab === "股市" ? 9 : 5.5}
              $ml={i === 0 ? -6 : 0}
            >
              {tab}
            </MarketTab>
          ))}
        </MarketBar>
        <ForumTab>▤ 论坛提问</ForumTab>
      </MarketStrip>

      <StatusRow>
        <TickerBox>
          <Watermark>
            畅客外汇
            <WatermarkUrl>-talkforex.com</WatermarkUrl>
          </Watermark>
          <TickerItem $x={87}>上证指数</TickerItem>
          <TickerItem $x={140} $value>3136.53</TickerItem>
          <TickerItem $x={196} $value>-37.59</TickerItem>
          <TickerItem $x={262}>文华商品</TickerItem>
          <TickerItem $x={315} $value>132.04</TickerItem>
          <TickerItem $x={364} $value>-0.77</TickerItem>
          <TickerItem $x={429}>CRB指数</TickerItem>
          <TickerItem $x={484} $value>220.48</TickerItem>
          <TickerItem $x={533} $value>-6.94</TickerItem>
        </TickerBox>
        <ImeBar>
          <ImeLogo>S</ImeLogo>
          <ImeText $l={8} $r={6}>中</ImeText>
          <Moon size={15} fill="#1566c8" strokeWidth={1} />
          <ImeText $l={4} $r={2}>°</ImeText>
          <ImeText $r={6}>,</ImeText>
          <Keyboard size={18} strokeWidth={2.2} />
          <ImeIcon $l={6}><User size={15} color="#8a9ab0" fill="#b0bccc" /></ImeIcon>
          <ImeIcon $l={5}><Shirt size={17} fill="#1566c8" strokeWidth={1} /></ImeIcon>
          <ImeIcon $l={5}><Wrench size={16} fill="#1566c8" strokeWidth={1} /></ImeIcon>
        </ImeBar>
        <StatusTools>
          <OrderInput />
          <OrderButton>下单</OrderButton>
          <OrderButton>外盘</OrderButton>
          <svg width="26" height="20" stroke="#e02020"><path d="M12 3l4 15" /></svg>
          <SignalBox />
          <SignalBars>
            {[4, 8, 12, 16, 20].map((h) => (
              <SignalBar key={h} $h={h} />
            ))}
          </SignalBars>
          <Clock>15:41:59-Loc</Clock>
        </StatusTools>
      </StatusRow>

      <TaskBar>
        <StartOrb />
        {quickIcons.map((icon) => (
          <QuickIcon key={icon.color} $color={icon.color} $gap={icon.gap} />
        ))}
        {taskButtons.map((w, i) => (
          <TaskButton key={i} $w={w} $ml={i === 0 ? 20 : 3} $active={i === taskButtons.length - 1} />
        ))}
      </TaskBar>

      <ForumBadge>75</ForumBadge>
    </Page>
  )
}
